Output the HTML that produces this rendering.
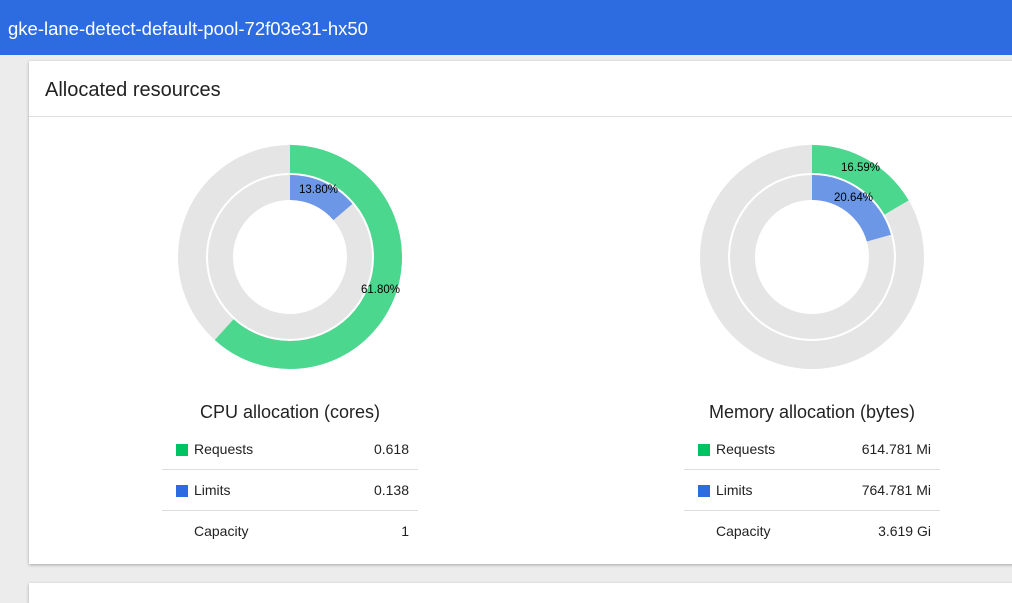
<!DOCTYPE html>
<html><head><style>
body{margin:0;width:1012px;height:589px;overflow:hidden;background:#ececec;font-family:"Liberation Sans",sans-serif;position:relative}
.top{position:absolute;left:0;top:0;width:1012px;height:55px;background:#2d6be0;color:#fff;font-size:18.5px;line-height:57px;padding-left:8px;box-sizing:border-box}
.card{position:absolute;left:29px;top:61px;width:990px;height:503px;background:#fff;box-shadow:0 1px 3px rgba(0,0,0,.3)}
.card2{position:absolute;left:29px;top:583px;width:990px;height:20px;background:#fff;box-shadow:0 1px 3px rgba(0,0,0,.3)}
.title{position:absolute;left:16px;top:18px;font-size:20px;color:#222}
.hr{position:absolute;left:0;top:55px;width:100%;height:1px;background:#e0e0e0}
svg{position:absolute;top:0;left:0}
.lbl{position:absolute;font-size:18px;color:#222;text-align:center;width:300px}
.tbl{position:absolute;width:256px;font-size:14px;color:#222}
.row{height:40px;border-bottom:1px solid #ddd;position:relative;line-height:40px}
.row:last-child{border:none}
.sq{position:absolute;left:14px;top:15px;width:12px;height:12px}
.k{position:absolute;left:32px;top:0}
.v{position:absolute;right:9px;top:0}
</style></head><body>
<div class="top">gke-lane-detect-default-pool-72f03e31-hx50</div>
<div class="card"><div class="title">Allocated resources</div><div class="hr"></div></div>
<div class="card2"></div>
<svg width="1012" height="589" font-family="Liberation Sans" font-size="11.5">
<g transform="translate(290,257) rotate(-90)" fill="none">
<circle r="98" stroke="#e5e5e5" stroke-width="28"/>
<circle r="98" stroke="#4cd78f" stroke-width="28" pathLength="100" stroke-dasharray="61.8 100"/>
<circle r="69.5" stroke="#e5e5e5" stroke-width="25"/>
<circle r="69.5" stroke="#6b97e6" stroke-width="25" pathLength="100" stroke-dasharray="13.8 100"/>
</g>
<text x="299" y="193">13.80%</text><text x="361" y="293">61.80%</text>
<g transform="translate(812,257) rotate(-90)" fill="none">
<circle r="98" stroke="#e5e5e5" stroke-width="28"/>
<circle r="98" stroke="#4cd78f" stroke-width="28" pathLength="100" stroke-dasharray="16.59 100"/>
<circle r="69.5" stroke="#e5e5e5" stroke-width="25"/>
<circle r="69.5" stroke="#6b97e6" stroke-width="25" pathLength="100" stroke-dasharray="20.64 100"/>
</g>
<text x="841" y="171">16.59%</text><text x="834" y="201">20.64%</text>
</svg>
<div class="lbl" style="left:140px;top:402px">CPU allocation (cores)</div>
<div class="lbl" style="left:662px;top:402px">Memory allocation (bytes)</div>
<div class="tbl" style="left:162px;top:429px">
<div class="row"><div class="sq" style="background:#00c463"></div><span class="k">Requests</span><span class="v">0.618</span></div>
<div class="row"><div class="sq" style="background:#2d6be0"></div><span class="k">Limits</span><span class="v">0.138</span></div>
<div class="row"><span class="k">Capacity</span><span class="v">1</span></div>
</div>
<div class="tbl" style="left:684px;top:429px">
<div class="row"><div class="sq" style="background:#00c463"></div><span class="k">Requests</span><span class="v">614.781 Mi</span></div>
<div class="row"><div class="sq" style="background:#2d6be0"></div><span class="k">Limits</span><span class="v">764.781 Mi</span></div>
<div class="row"><span class="k">Capacity</span><span class="v">3.619 Gi</span></div>
</div>
</body></html>
